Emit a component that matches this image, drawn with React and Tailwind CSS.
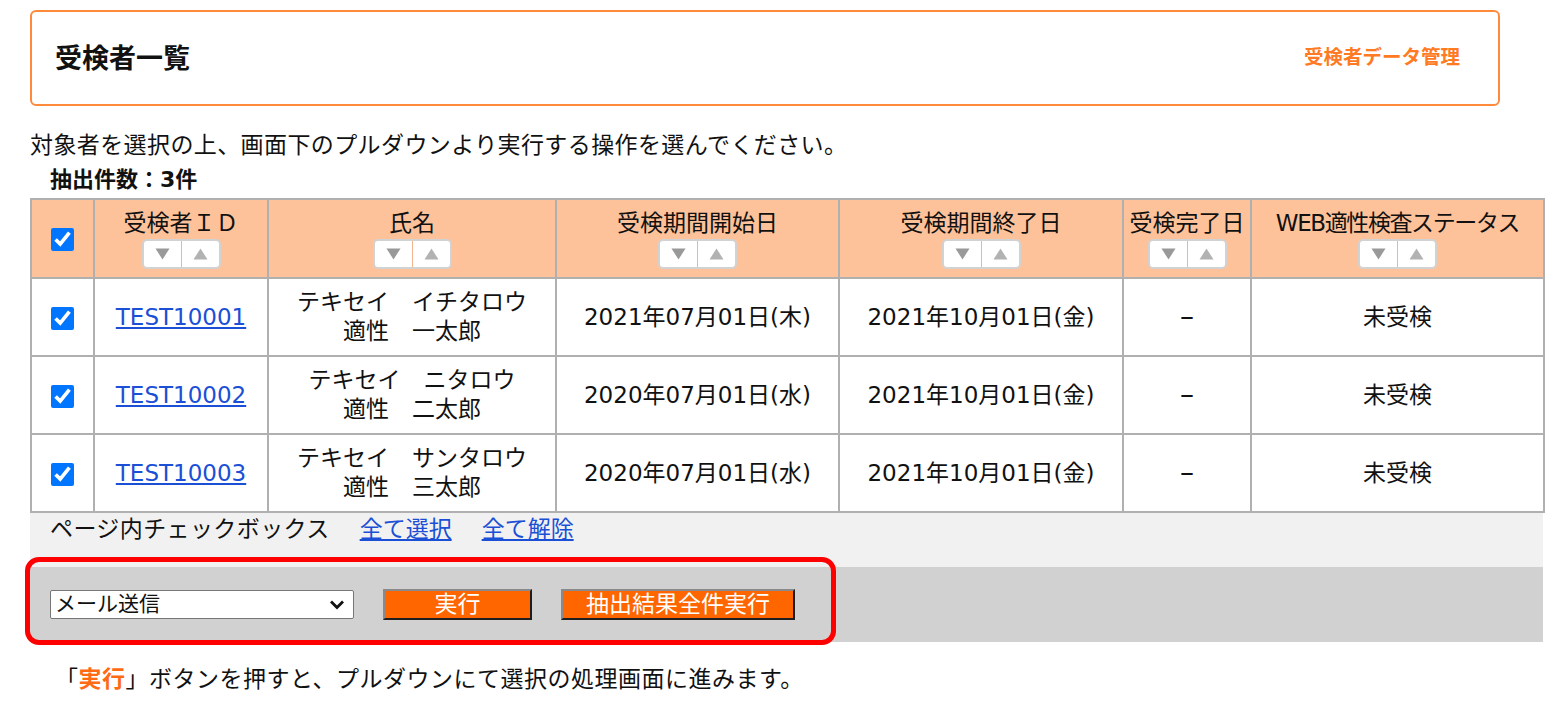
import React from "react";

const font = { fontFamily: '"DejaVu Sans", "Noto Sans CJK JP", sans-serif' };

function SortButtons() {
  return (
    <div className="mx-auto mt-[2px] flex h-[30px] w-[79px] overflow-hidden rounded-[5px] border-2 border-[#d2d2d2] bg-white">
      <div className="flex flex-1 items-center justify-center border-r border-[#f5b58a]">
        <svg width="15" height="12" viewBox="0 0 15 12"><path d="M0.5 0.5 H14.5 L7.5 11.5 Z" fill="#999999" /></svg>
      </div>
      <div className="flex flex-1 items-center justify-center">
        <svg width="15" height="12" viewBox="0 0 15 12"><path d="M0.5 11.5 H14.5 L7.5 0.5 Z" fill="#b2b2b2" /></svg>
      </div>
    </div>
  );
}

const rows = [
  { id: "TEST10001", kana: "テキセイ　イチタロウ", name: "適性　一太郎", start: "2021年07月01日(木)", end: "2021年10月01日(金)" },
  { id: "TEST10002", kana: "テキセイ　ニタロウ", name: "適性　二太郎", start: "2020年07月01日(水)", end: "2021年10月01日(金)" },
  { id: "TEST10003", kana: "テキセイ　サンタロウ", name: "適性　三太郎", start: "2020年07月01日(水)", end: "2021年10月01日(金)" },
];

function Check() {
  return <input type="checkbox" defaultChecked className="h-[23px] w-[23px] accent-[#0075ff] align-middle" />;
}

export default function App() {
  const th = "border-2 border-[#b0b0b0] bg-[#fec29a] px-0 pt-[9px] pb-[7px] align-top font-normal text-[23px] leading-[28px] text-[#111]";
  const td = "border-2 border-[#b0b0b0] bg-white text-center text-[23px] leading-[29px] text-[#111]";
  return (
    <div className="relative h-[702px] w-[1562px] bg-white text-[#111]" style={font}>
      <div className="pl-[30px] pt-[10px]">
        <div className="flex h-[96px] w-[1470px] items-center justify-between rounded-[6px] border-2 border-[#ff8a3c] pl-[23px] pr-[38px]">
          <div className="text-[27px] font-bold leading-none text-[#111]">受検者一覧</div>
          <div className="text-[19.5px] font-bold leading-none text-[#ff7a22]">受検者データ管理</div>
        </div>
        <div className="mt-[24px] h-[30px] text-[23px] leading-[30px] tracking-[0.4px]">対象者を選択の上、画面下のプルダウンより実行する操作を選んでください。</div>
        <div className="ml-[20px] mt-[5px] h-[30px] text-[22px] font-bold leading-[30px]">抽出件数：3件</div>
        <table className="mt-[3px] w-[1513px] table-fixed border-collapse">
          <colgroup>
            <col style={{ width: 63 }} />
            <col style={{ width: 174 }} />
            <col style={{ width: 288 }} />
            <col style={{ width: 283 }} />
            <col style={{ width: 284 }} />
            <col style={{ width: 128 }} />
            <col style={{ width: 293 }} />
          </colgroup>
          <thead>
            <tr className="h-[79px]">
              <th className="border-2 border-[#b0b0b0] bg-[#fec29a] align-middle"><Check /></th>
              <th className={th}>受検者ＩＤ<SortButtons /></th>
              <th className={th}>氏名<SortButtons /></th>
              <th className={th}>受検期間開始日<SortButtons /></th>
              <th className={th}>受検期間終了日<SortButtons /></th>
              <th className={th}>受検完了日<SortButtons /></th>
              <th className={`${th} whitespace-nowrap`}><span className="tracking-[-1.4px]">WEB適性検査ステータス</span><SortButtons /></th>
            </tr>
          </thead>
          <tbody>
            {rows.map((r) => (
              <tr key={r.id} className="h-[78px]">
                <td className={td}><Check /></td>
                <td className={td}><a href="#" className="text-[#1a4fd6] underline">{r.id}</a></td>
                <td className={td}>
                  <div>{r.kana}</div>
                  <div>{r.name}</div>
                </td>
                <td className={td}>{r.start}</td>
                <td className={td}>{r.end}</td>
                <td className={td}><span className="text-[28px]">–</span></td>
                <td className={td}>未受検</td>
              </tr>
            ))}
          </tbody>
        </table>
        <div className="flex h-[54px] w-[1513px] items-start bg-[#f1f1f1] pl-[20px] pt-[1px] text-[23px] leading-[30px]">
          <span className="tracking-[0.4px]">ページ内チェックボックス</span>
          <a href="#" className="ml-[30px] text-[#1a4fd6] underline">全て選択</a>
          <a href="#" className="ml-[30px] text-[#1a4fd6] underline">全て解除</a>
        </div>
        <div className="flex h-[75px] w-[1513px] items-center bg-[#d1d1d1] pl-[20px]">
          <div className="flex h-[29px] w-[304px] items-center justify-between rounded-[2px] border border-[#767676] bg-white pl-[4px] pr-[7px] text-[21px] leading-none">
            <span>メール送信</span>
            <svg width="18" height="12" viewBox="0 0 18 12"><path d="M3 2.5 L9 8.5 L15 2.5" fill="none" stroke="#111" strokeWidth="2.8" /></svg>
          </div>
          <button className="ml-[29px] h-[31px] w-[149px] border-2 border-b-[#1e1e1e] border-l-[#8a8a8a] border-r-[#1e1e1e] border-t-[#8a8a8a] bg-[#ff6600] text-[23px] leading-none text-white">実行</button>
          <button className="ml-[29px] h-[31px] w-[234px] border-2 border-b-[#1e1e1e] border-l-[#8a8a8a] border-r-[#1e1e1e] border-t-[#8a8a8a] bg-[#ff6600] text-[23px] leading-none text-white">抽出結果全件実行</button>
        </div>
        <div className="ml-[25px] mt-[22px] text-[23px] leading-[30px] tracking-[0.5px]">
          「<span className="font-bold text-[#ff6a14]">実行</span>」ボタンを押すと、プルダウンにて選択の処理画面に進みます。
        </div>
      </div>
      <div className="absolute left-[25px] top-[557px] h-[88px] w-[811px] rounded-[14px] border-[5px] border-[#ff0000]" />
    </div>
  );
}
